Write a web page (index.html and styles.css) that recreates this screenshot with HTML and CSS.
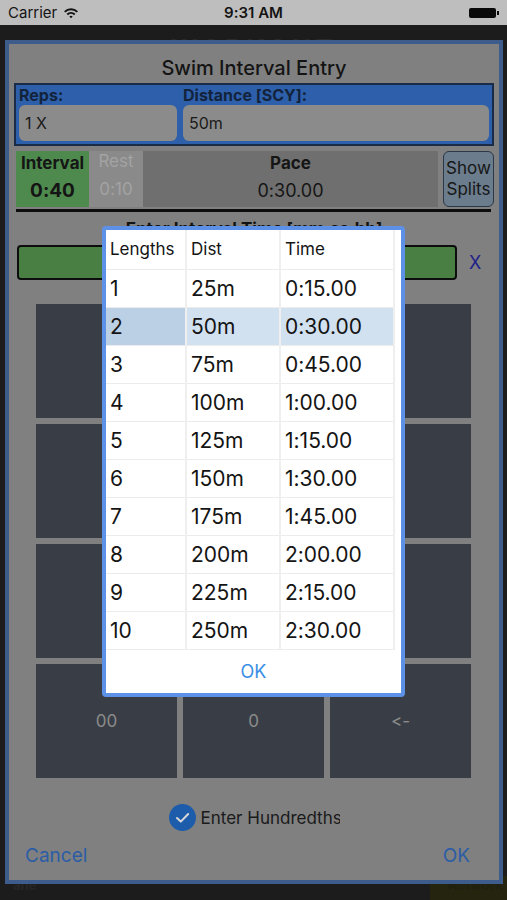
FILE: index.html
```html
<!DOCTYPE html>
<html>
<head>
<meta charset="utf-8">
<link rel="stylesheet" href="styles.css">
</head>
<body>
<div class="phone">
  <div class="statusbar">
    <div class="sb-left">Carrier
      <svg class="wifi" width="16" height="12" viewBox="0 0 16 12"><path d="M1 4.2 A10 10 0 0 1 15 4.2 L13.6 5.6 A8 8 0 0 0 2.4 5.6 Z" fill="#111"/><path d="M3.6 6.8 A6.4 6.4 0 0 1 12.4 6.8 L11 8.2 A4.4 4.4 0 0 0 5 8.2 Z" fill="#111"/><path d="M6.3 9.4 A2.6 2.6 0 0 1 9.7 9.4 L8 11.2 Z" fill="#111"/></svg>
    </div>
    <div class="sb-time">9:31 AM</div>
    <div class="sb-right"><span class="battery"></span><span class="nub"></span></div>
  </div>
  <div class="screen">
    <div class="app-nav"><span class="nav-title">WORKOUT</span></div>
    <div class="app-body"></div>
    <div class="app-tabs"><span class="tab">ane</span><span class="tab tab-net">Network</span></div>

    <div class="dialog">
      <div class="dlg-title">Swim Interval Entry</div>
      <div class="blue-box">
        <div class="field"><div class="lbl">Reps:</div><div class="inp">1 X</div></div>
        <div class="field"><div class="lbl">Distance [SCY]:</div><div class="inp">50m</div></div>
      </div>
      <div class="times">
        <div class="t interval"><span class="l1">Interval</span><span class="l2">0:40</span></div>
        <div class="t rest"><span class="l1">Rest</span><span class="l2">0:10</span></div>
        <div class="t pace"><span class="l1">Pace</span><span class="l2">0:30.00</span></div>
        <div class="splits">Show<br>Splits</div>
      </div>
      <div class="rule"></div>
      <div class="enter-lbl">Enter Interval Time [mm:ss.hh]</div>
      <div class="entry-row"><div class="entry"></div><span class="clear">X</span></div>
      <div class="keypad">
        <div class="key"></div><div class="key"></div><div class="key"></div>
        <div class="key"></div><div class="key"></div><div class="key"></div>
        <div class="key"></div><div class="key"></div><div class="key"></div>
        <div class="key">00</div><div class="key">0</div><div class="key">&lt;-</div>
      </div>
      <div class="hund">
        <span class="check"><svg width="27" height="27" viewBox="0 0 27 27"><circle cx="13.5" cy="13.5" r="13.5" fill="#1d5cab"/><path d="M8 14 L11.8 17.6 L19.2 10" stroke="#d8d8d8" stroke-width="2" fill="none" stroke-linecap="round" stroke-linejoin="round"/></svg></span>
        <span class="hund-text">Enter Hundredths</span>
      </div>
      <div class="actions"><span>Cancel</span><span>OK</span></div>
    </div>

    <div class="popup">
      <table class="splits-table">
        <thead>
          <tr><th>Lengths</th><th>Dist</th><th>Time</th></tr>
        </thead>
        <tbody>
          <tr><td>1</td><td>25m</td><td>0:15.00</td></tr>
          <tr class="sel"><td>2</td><td>50m</td><td>0:30.00</td></tr>
          <tr><td>3</td><td>75m</td><td>0:45.00</td></tr>
          <tr><td>4</td><td>100m</td><td>1:00.00</td></tr>
          <tr><td>5</td><td>125m</td><td>1:15.00</td></tr>
          <tr><td>6</td><td>150m</td><td>1:30.00</td></tr>
          <tr><td>7</td><td>175m</td><td>1:45.00</td></tr>
          <tr><td>8</td><td>200m</td><td>2:00.00</td></tr>
          <tr><td>9</td><td>225m</td><td>2:15.00</td></tr>
          <tr><td>10</td><td>250m</td><td>2:30.00</td></tr>
        </tbody>
      </table>
      <div class="popup-ok">OK</div>
    </div>
  </div>
</div>
</body>
</html>
```
FILE: styles.css
```css
* { box-sizing: border-box; }
body {
  margin: 0;
  width: 507px;
  height: 900px;
  overflow: hidden;
  background: #1c1c1c;
  font-family: Inter, "Liberation Sans", sans-serif;
  font-variant-ligatures: none;
  font-feature-settings: "calt" 0;
}
.phone {
  width: 507px;
  height: 900px;
  display: flex;
  flex-direction: column;
}
.statusbar {
  height: 25px;
  background: #bebebe;
  display: grid;
  grid-template-columns: 1fr auto 1fr;
  align-items: center;
  padding: 0 8px 0 8px;
  font-size: 15px;
  color: #141414;
}
.sb-left { display: flex; align-items: center; gap: 6px; }
.sb-time { font-weight: 600; }
.sb-right { display: flex; justify-content: flex-end; align-items: center; }
.battery {
  width: 27px; height: 10px;
  background: #0a0a0a;
  border-radius: 2px;
}
.nub { width: 2px; height: 4px; background: #0a0a0a; margin-left: 1px; }

.screen {
  position: relative;
  flex: 1;
  display: flex;
  flex-direction: column;
  background: #1c1c1c;
}
.app-nav {
  height: 44px;
  display: flex;
  justify-content: center;
  padding-top: 9px;
}
.nav-title {
  font-size: 26px;
  font-weight: 700;
  letter-spacing: 4px;
  color: #2a2a2a;
  line-height: 30px;
}
.app-body { flex: 1; }
.app-tabs {
  height: 24px;
  display: flex;
  justify-content: space-between;
  font-size: 13px;
  font-weight: 700;
  color: #262626;
  line-height: 18px;
}
.tab { padding: 0 13px; }
.tab-net { width: 77px; background: #24240f; padding: 0 0 0 18px; color: #202010; }

.dialog {
  position: absolute;
  left: 5px;
  top: 15px;
  width: 498px;
  height: 844px;
  border: 4px solid #3d5c8b;
  background: #808080;
  padding: 0 5px;
  display: flex;
  flex-direction: column;
}
.dlg-title {
  height: 39px;
  padding-top: 9px;
  line-height: 30px;
  text-align: center;
  font-size: 20px;
  font-weight: 500;
  color: #141414;
}
.blue-box {
  height: 63px;
  border: 2px solid #1a2b48;
  background: #2d5fab;
  padding: 0 3px 3px;
  display: grid;
  grid-template-columns: 158px 1fr;
  column-gap: 6px;
}
.lbl {
  height: 20px;
  line-height: 20px;
  font-size: 16px;
  font-weight: 700;
  color: #13233c;
}
.inp {
  height: 36px;
  border-radius: 6px;
  background: #8b8b8b;
  font-size: 16px;
  color: #1a1a1a;
  display: flex;
  align-items: center;
  padding-left: 6px;
}
.times {
  display: flex;
  height: 56px;
  margin: 5px 0 0 2px;
}
.t {
  display: flex;
  flex-direction: column;
  align-items: center;
  color: #151515;
}
.t .l1 { height: 24px; line-height: 24px; font-size: 17px; }
.t .l2 { height: 32px; line-height: 32px; font-size: 19px; }
.interval { width: 73px; background: #4e8a4d; font-weight: 700; }
.rest { width: 54px; background: #8a8a8a; color: #a3a3a3; }
.rest .l1, .rest .l2 { font-size: 17px; line-height: 20px; height: 28px; }
.pace { width: 295px; background: #6f6f6f; }
.pace .l1 { font-weight: 700; }
.pace .l2 { font-size: 18px; }
.splits {
  width: 51px;
  margin-left: 5px;
  background: #6b7c8c;
  border: 1.5px solid #2b3848;
  border-radius: 6px;
  font-size: 17px;
  line-height: 21px;
  text-align: center;
  color: #161616;
  display: flex;
  align-items: center;
  justify-content: center;
}
.rule {
  height: 3px;
  margin: 2px 3px 0 2px;
  background: #0d0d0d;
}
.enter-lbl {
  height: 26px;
  line-height: 34px;
  text-align: center;
  font-size: 17px;
  font-weight: 700;
  color: #121212;
}
.entry-row {
  display: flex;
  align-items: center;
  margin: 7px 0 0 3px;
}
.entry {
  width: 440px;
  height: 35px;
  border: 2px solid #0d0d0d;
  border-radius: 4px;
  background: #4a7f44;
}
.clear {
  margin-left: 12px;
  font-size: 18px;
  color: #20208a;
}
.keypad {
  margin: 24px 0 0 22px;
  display: grid;
  grid-template-columns: repeat(3, 141px);
  grid-template-rows: repeat(4, 114px);
  column-gap: 6px;
  row-gap: 6px;
}
.key {
  background: #393e46;
  color: #8b8b8b;
  font-size: 17px;
  display: flex;
  align-items: center;
  justify-content: center;
}
.hund {
  margin-top: 26px;
  height: 27px;
  display: flex;
  justify-content: center;
  align-items: center;
  gap: 5px;
}
.check { width: 27px; height: 27px; display: block; }
.check svg { display: block; }
.hund-text {
  width: 139px;
  overflow: hidden;
  white-space: nowrap;
  font-size: 17px;
  color: #1a1a1a;
}
.actions {
  margin-top: 9px;
  height: 30px;
  display: flex;
  justify-content: space-between;
  align-items: center;
  padding: 0 24px 0 11px;
  font-size: 19px;
  color: #2b5da6;
}

.popup {
  position: absolute;
  left: 102px;
  top: 201px;
  width: 303px;
  height: 471px;
  border: 4px solid #5d91e8;
  border-radius: 4px;
  background: #ffffff;
  display: flex;
  flex-direction: column;
}
.splits-table {
  width: 289px;
  border-collapse: collapse;
  table-layout: fixed;
  color: #141414;
}
.splits-table th:nth-child(1), .splits-table td:nth-child(1) { width: 80px; }
.splits-table th:nth-child(2), .splits-table td:nth-child(2) { width: 94px; }
.splits-table th, .splits-table td {
  padding: 0 0 0 4px;
  text-align: left;
  border-right: 2px solid #efefef;
  border-bottom: 1px solid #ececec;
  white-space: nowrap;
}
.splits-table th {
  height: 39px;
  font-size: 17px;
  font-weight: 400;
}
.splits-table td {
  height: 38px;
  font-size: 21px;
}
.splits-table tr.sel td { background: #d1e1f0; }
.splits-table tr.sel td:first-child { background: #bcd0e5; }
.popup-ok {
  flex: 1;
  display: flex;
  align-items: center;
  justify-content: center;
  font-size: 18px;
  color: #3a8ee6;
}
```
